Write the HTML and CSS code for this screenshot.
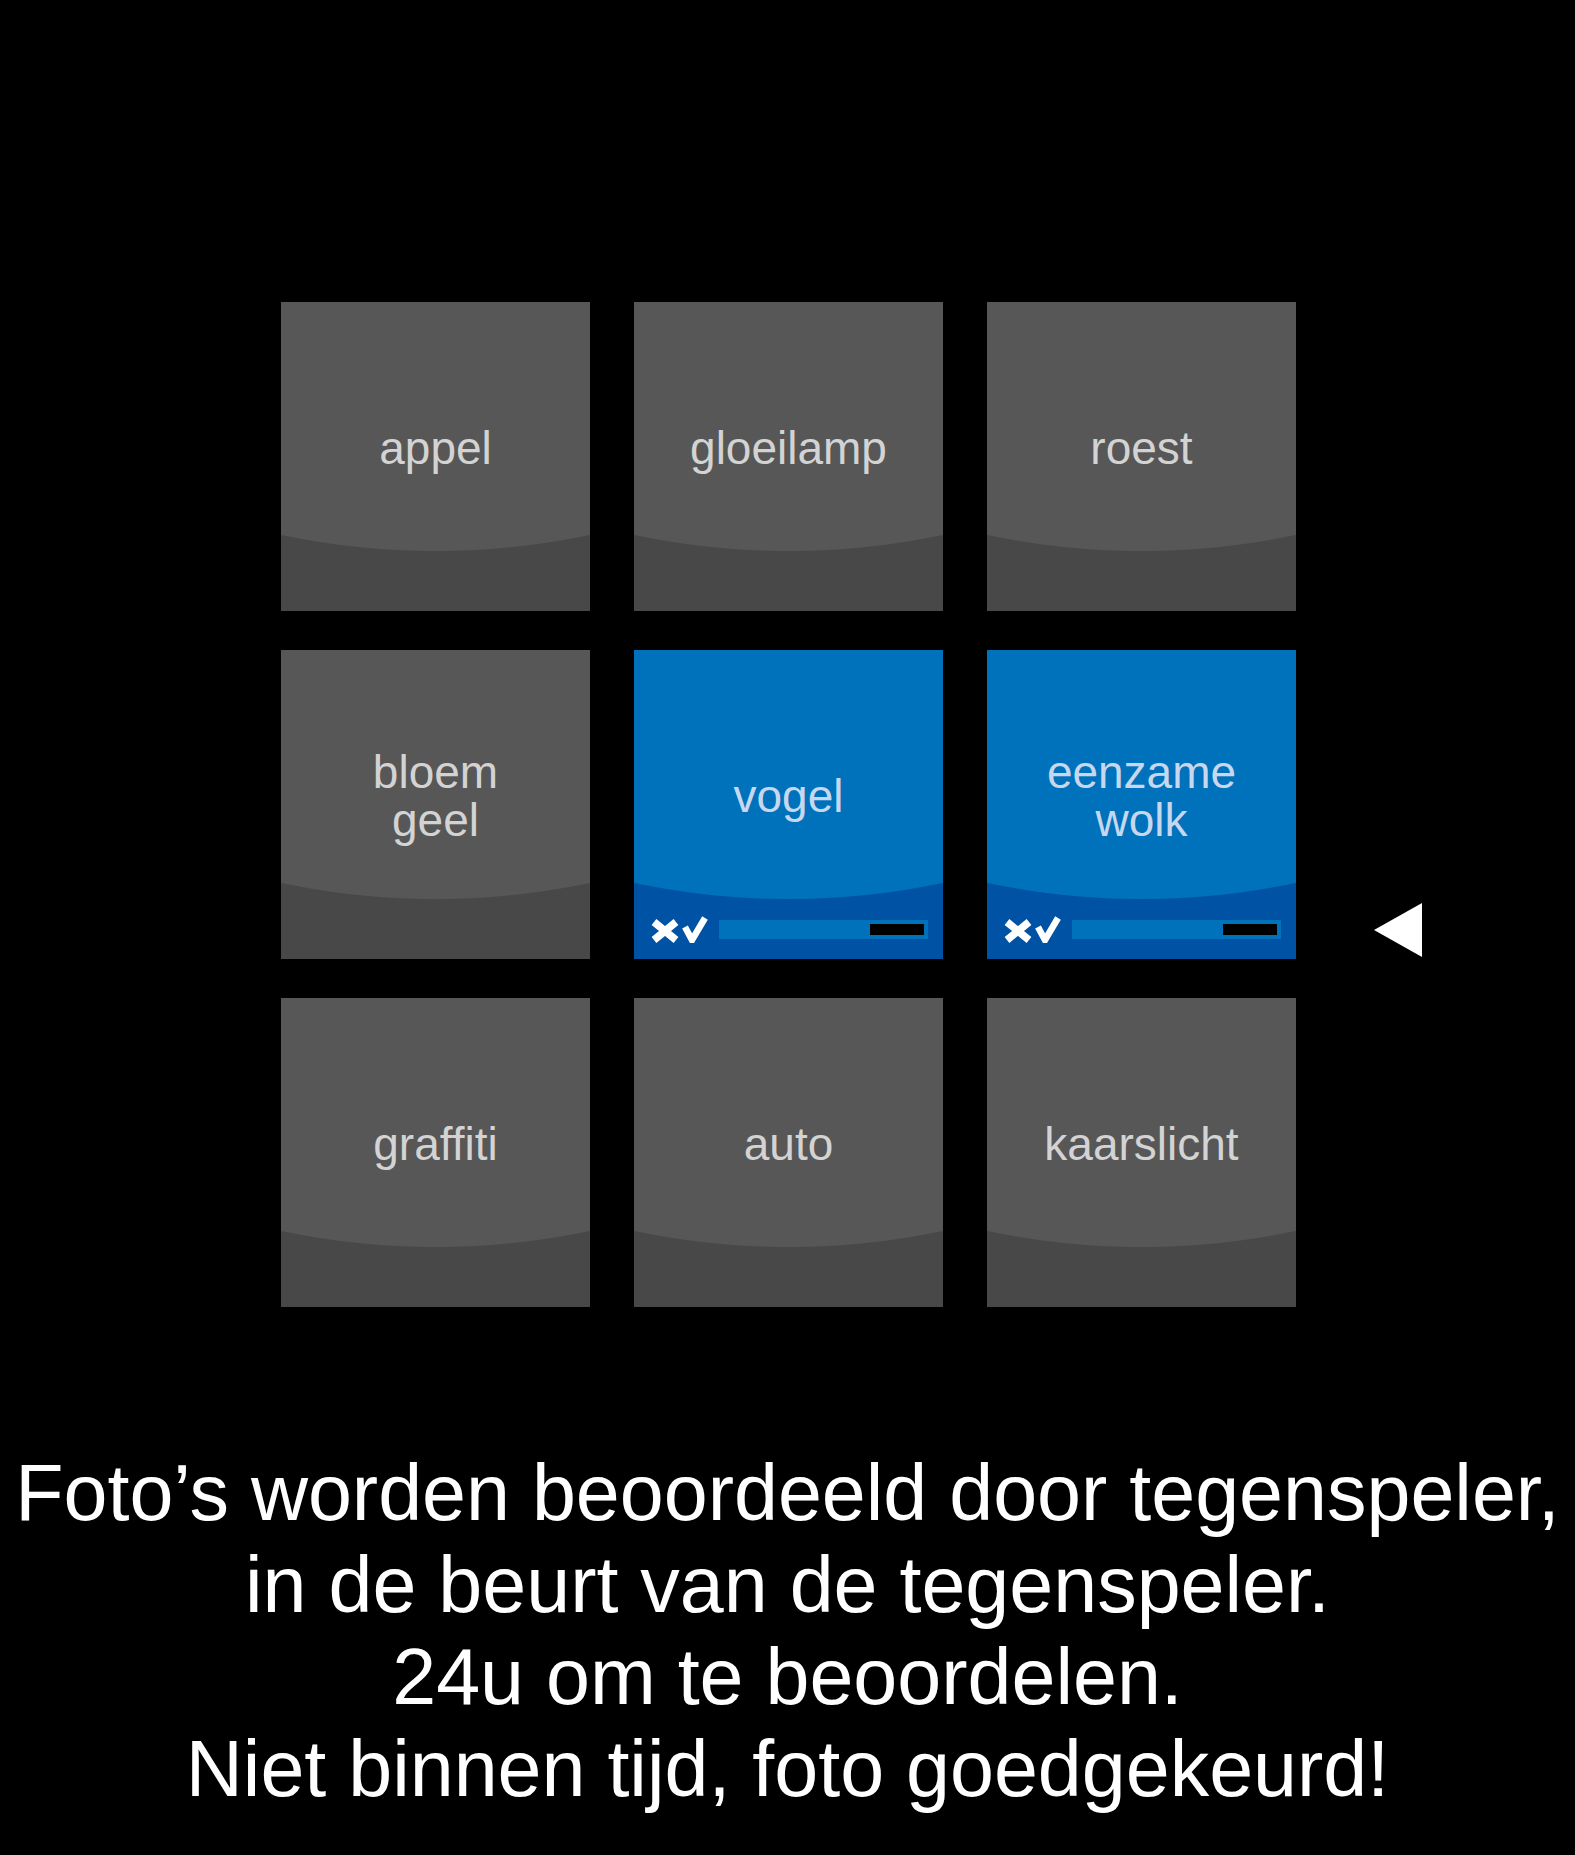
FILE: index.html
```html
<!DOCTYPE html>
<html lang="nl">
<head>
<meta charset="utf-8">
<title>Beoordelen</title>
<link rel="stylesheet" href="styles.css">
</head>
<body>
<main class="page">
  <div class="board">
    <div class="tile"><span class="label">appel</span></div>
    <div class="tile"><span class="label">gloeilamp</span></div>
    <div class="tile"><span class="label">roest</span></div>
    <div class="tile"><span class="label">bloem<br>geel</span></div>
    <div class="tile tile-blue">
      <span class="label">vogel</span>
      <div class="tile-foot">
        <svg class="xv" width="58" height="28" viewBox="0 0 58 28">
          <path d="M4 7 L26 25 M26 7 L4 25" stroke="#fff" stroke-width="7.5" stroke-linecap="butt" fill="none"/>
          <path d="M35 12 L42 25 L55 3" stroke="#fff" stroke-width="6.5" stroke-linejoin="miter" fill="none"/>
        </svg>
        <div class="timer"><div class="timer-left"></div></div>
      </div>
    </div>
    <div class="tile tile-blue">
      <span class="label">eenzame<br>wolk</span>
      <div class="tile-foot">
        <svg class="xv" width="58" height="28" viewBox="0 0 58 28">
          <path d="M4 7 L26 25 M26 7 L4 25" stroke="#fff" stroke-width="7.5" stroke-linecap="butt" fill="none"/>
          <path d="M35 12 L42 25 L55 3" stroke="#fff" stroke-width="6.5" stroke-linejoin="miter" fill="none"/>
        </svg>
        <div class="timer"><div class="timer-left"></div></div>
      </div>
    </div>
    <div class="tile"><span class="label">graffiti</span></div>
    <div class="tile"><span class="label">auto</span></div>
    <div class="tile"><span class="label">kaarslicht</span></div>
    <div class="pointer"></div>
  </div>
  <p class="info">Foto’s worden beoordeeld door tegenspeler,<br>in de beurt van de tegenspeler.<br>24u om te beoordelen.<br>Niet binnen tijd, foto goedgekeurd!</p>
</main>
</body>
</html>
```
FILE: styles.css
```css
html, body {
  margin: 0;
  padding: 0;
  background: #000;
}
body {
  font-family: "Liberation Sans", Arial, sans-serif;
  color: #fff;
}
.page {
  width: 1575px;
  height: 1855px;
  padding-top: 302px;
  box-sizing: border-box;
  overflow: hidden;
}
.board {
  position: relative;
  margin-left: 281px;
  width: 1015px;
  display: grid;
  grid-template-columns: 309px 309px 309px;
  grid-template-rows: 309px 309px 309px;
  column-gap: 44px;
  row-gap: 39px;
}
.tile {
  position: relative;
  display: flex;
  align-items: center;
  justify-content: center;
  padding-bottom: 17px;
  box-sizing: border-box;
  background: radial-gradient(circle 746px at 50% -497px, #575757 745.5px, #484848 746.5px);
}
.tile-blue {
  background: radial-gradient(circle 746px at 50% -497px, #0071bb 745.5px, #0053a4 746.5px);
}
.label {
  font-size: 46px;
  line-height: 48px;
  text-align: center;
  color: #d3d3d3;
}
.tile-blue .label {
  color: #c6d7ee;
}
.tile-foot {
  position: absolute;
  left: 16px;
  bottom: 16px;
  display: flex;
  align-items: center;
  gap: 11px;
}
.xv {
  display: block;
}
.timer {
  position: relative;
  width: 209px;
  height: 19px;
  background: #0071bb;
}
.timer-left {
  position: absolute;
  right: 4px;
  top: 4px;
  width: 54px;
  height: 11px;
  background: #000;
}
.pointer {
  position: absolute;
  left: 1093px;
  top: 601px;
  width: 0;
  height: 0;
  border-top: 27.5px solid transparent;
  border-bottom: 27.5px solid transparent;
  border-right: 48px solid #fff;
}
.info {
  margin: 140px 0 0;
  font-size: 79px;
  line-height: 92px;
  text-align: center;
  white-space: nowrap;
}
```
